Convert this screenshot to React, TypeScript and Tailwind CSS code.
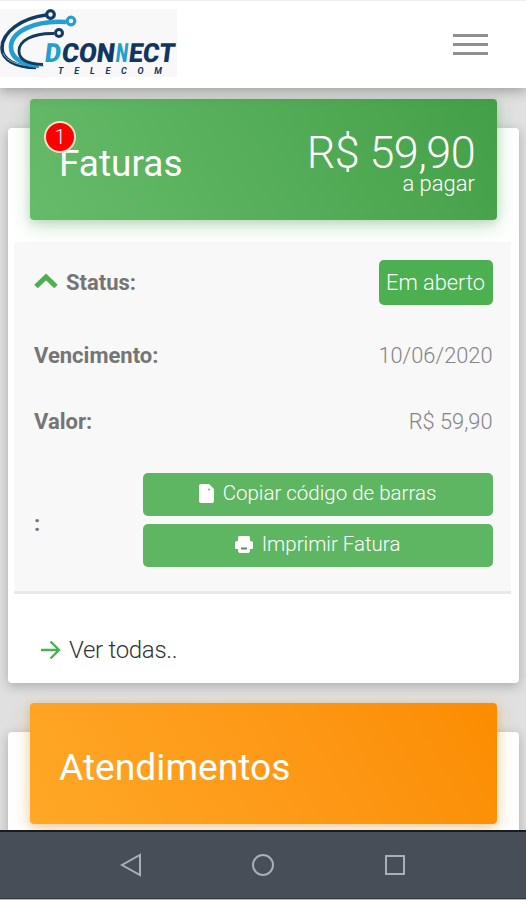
import type { ReactNode } from "react";

const Logo = () => (
  <svg width="177" height="68" viewBox="0 9 177 68" className="bg-[#f8f8f8]">
    <g fill="none">
      <path d="M46 15C22 18 2 32 2 48c0 12 14 19 34 19.500" stroke="#123a63" strokeWidth="3.600" />
      <path d="M3 53c4 9 17 14 41 13" stroke="#8fb4cc" strokeWidth="1" />
      <path d="M66 22C34 20 11 32 11 47c0 11 10 17 28 19" stroke="#239fce" strokeWidth="4.600" />
      <path d="M54 33.500C32 33 19 41 19 51c0 8 8 13 24 13.500" stroke="#123a63" strokeWidth="2.800" />
      <circle cx="50.500" cy="14.500" r="3.800" stroke="#123a63" strokeWidth="3.200" />
      <circle cx="71" cy="21" r="3.800" stroke="#239fce" strokeWidth="3.200" />
      <circle cx="59" cy="33" r="3.500" stroke="#123a63" strokeWidth="3" />
    </g>
    <g fontFamily="Roboto, sans-serif" fill="#12365f">
      <g transform="translate(0 62) skewX(-7)" fontSize="26.500" fontWeight="900">
        <text x="44" y="0" fill="#239fce" textLength="16" lengthAdjust="spacingAndGlyphs">D</text>
        <text x="61" y="0" textLength="53" lengthAdjust="spacingAndGlyphs">CON</text>
        <text x="115" y="0" fill="#239fce" textLength="12" lengthAdjust="spacingAndGlyphs">N</text>
        <text x="128" y="0" textLength="46" lengthAdjust="spacingAndGlyphs">ECT</text>
      </g>
      <text x="58" y="73.500" fontSize="9" fontStyle="italic" fontWeight="700" textLength="104">TELECOM</text>
    </g>
  </svg>
);

const FileIcon = () => (
  <svg width="15" height="19" viewBox="0 0 15 19" fill="#fff">
    <path d="M2 0h8l5 5v12a2 2 0 0 1-2 2H2a2 2 0 0 1-2-2V2a2 2 0 0 1 2-2z" />
    <circle cx="10" cy="5.500" r="1" fill="#5fb662" />
  </svg>
);

const PrintIcon = () => (
  <svg width="18" height="17" viewBox="0 0 18 17" fill="#fff">
    <path d="M4 0h10l1 1v4h1a2 2 0 0 1 2 2v5a1 1 0 0 1-1 1h-2v2.500L13.500 17h-9L3 15.500V13H1a1 1 0 0 1-1-1V7a2 2 0 0 1 2-2h1V1z" />
    <path d="M6 11.500h6v2H6z" fill="#5c8a5e" />
  </svg>
);

const Row = ({ label, className, children }: { label: ReactNode; className: string; children: ReactNode }) => (
  <div className={`flex items-center justify-between pl-5 pr-[18.5px] ${className}`}>
    <span className="flex items-center font-bold text-[#757575]">{label}</span>
    {children}
  </div>
);

const ActionButton = ({ icon, text }: { icon: ReactNode; text: string }) => (
  <button className="flex h-[43px] w-[350px] items-center justify-center gap-[9px] rounded-[5px] bg-[#5fb662] pb-0.5 text-[20.5px] text-white">
    {icon}
    {text}
  </button>
);

const App = () => {
  return (
    <div className="flex h-[900px] w-[526px] flex-col overflow-hidden bg-[#e0e0e0] font-['Roboto',sans-serif] text-[22px] leading-none font-light">
      <header className="relative z-10 flex h-[88px] shrink-0 items-start justify-between border-t border-[#eeeeee] bg-white pt-2 shadow-[0_3px_12px_rgba(0,0,0,0.3)]">
        <Logo />
        <button className="mt-[25px] mr-[38px] flex w-[35px] flex-col gap-[6.5px]" aria-label="Menu">
          <span className="h-[2.5px] bg-[#909090]"></span>
          <span className="h-[2.5px] bg-[#909090]"></span>
          <span className="h-[2.5px] bg-[#909090]"></span>
        </button>
      </header>

      <main className="flex h-[742px] shrink-0 flex-col gap-[49px] overflow-hidden pt-10 pr-[7px] pl-2">
        {/* Invoices */}
        <section className="h-[554.5px] shrink-0 rounded bg-white shadow-[0_3px_12px_rgba(0,0,0,0.24)]">
          <div className="relative mx-[22px] -mt-[29px] flex h-[121px] justify-between rounded bg-linear-60 from-[#66bb6a] to-[#43a047] px-[22px] text-white shadow-[0_6px_20px_rgba(76,175,80,0.32),0_2px_8px_rgba(0,0,0,0.12)]">
            <h2 className="mt-[46px] ml-[7px] text-[37px] font-normal">Faturas</h2>
            <div className="mt-[31px] text-right">
              <p className="text-[45px] tracking-[-0.6px]">R$ 59,90</p>
              <p className="-mt-[2.5px]">a pagar</p>
            </div>
            <span className="absolute top-[22px] left-[14px] flex size-8 items-center justify-center rounded-full border-2 border-[#f7dfc8] bg-[#ff0000] text-[20px]">
              1
            </span>
          </div>

          <div className="mr-2 ml-[6px] mt-[22px] h-[352px] border-b-[3px] border-[#e9e9e9] bg-[#f8f8f8]">
            <Row
              className="h-[81px]"
              label={
                <>
                  <svg width="24" height="16" viewBox="0 0 24 16" fill="none" className="mr-2 mb-1">
                    <path d="M2 13.500 12 4l10 9.500" stroke="#4caf50" strokeWidth="5" />
                  </svg>
                  Status:
                </>
              }
            >
              <span className="flex h-[45px] w-[114px] items-center justify-center rounded-[5px] bg-[#4caf50] text-[21.8px] text-white">
                Em aberto
              </span>
            </Row>
            <Row className="h-[66px]" label="Vencimento:">
              <span className="text-[21.8px] text-[#858585]">10/06/2020</span>
            </Row>
            <Row className="h-[66px]" label="Valor:">
              <span className="text-[21.8px] text-[#858585]">R$ 59,90</span>
            </Row>
            <Row className="h-[130px]" label={<span className="pt-2">:</span>}>
              <div className="flex flex-col gap-2">
                <ActionButton icon={<FileIcon />} text="Copiar código de barras" />
                <ActionButton icon={<PrintIcon />} text="Imprimir Fatura" />
              </div>
            </Row>
          </div>

          <a className="mt-[44px] ml-[33px] flex items-center gap-2 text-[24px] tracking-[-0.3px] text-[#333333]">
            <svg width="20" height="20" viewBox="0 0 20 20" fill="none" stroke="#4caf50" strokeWidth="2.400">
              <path d="M0 10h18M9.500 1.500 18 10l-8.500 8.500" />
            </svg>
            Ver todas..
          </a>
        </section>

        {/* Support tickets */}
        <section className="h-[200px] shrink-0 rounded bg-white shadow-[0_3px_12px_rgba(0,0,0,0.24)]">
          <div className="mx-[22px] -mt-[29px] h-[121px] rounded bg-linear-60 from-[#ffa726] to-[#fb8c00] pt-[46px] pl-[29px] text-white shadow-[0_6px_20px_rgba(255,152,0,0.32),0_2px_8px_rgba(0,0,0,0.12)]">
            <h2 className="text-[37.2px] font-normal">Atendimentos</h2>
          </div>
        </section>
      </main>

      {/* Android navigation bar */}
      <nav className="z-10 flex h-[69px] shrink-0 items-center justify-center gap-[109px] border-t-2 border-b border-t-[#161c20] border-b-[#303940] bg-[#464e57]">
        <svg width="22" height="24" viewBox="0 0 22 24" fill="none" stroke="#a9afb4" strokeWidth="2">
          <path d="M20 2v20L2 12z" />
        </svg>
        <svg width="24" height="24" viewBox="0 0 24 24" fill="none" stroke="#a9afb4" strokeWidth="2">
          <circle cx="12" cy="12" r="10" />
        </svg>
        <svg width="22" height="22" viewBox="0 0 22 22" fill="none" stroke="#a9afb4" strokeWidth="2">
          <path d="M2 2h18v18H2z" />
        </svg>
      </nav>
      <div className="h-px shrink-0 bg-[#b5b9bc]"></div>
    </div>
  );
};

export default App;
